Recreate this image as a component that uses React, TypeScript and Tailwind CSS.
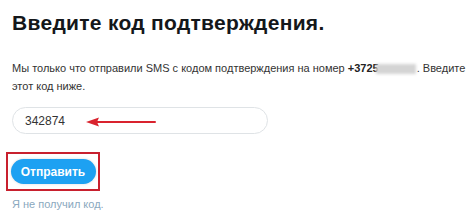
export default function App() {
  return (
    <div className="w-[474px] h-[218px] bg-white overflow-hidden relative font-['Liberation_Sans',Arial,sans-serif]">
      <div className="pl-3 pt-[9px]">
        <h1 className="text-[21px] leading-[28px] font-bold text-[#14171a] tracking-[0.3px]">
          Введите код подтверждения.
        </h1>

        <p className="mt-[22px] w-[458px] text-[11px] leading-[18px] text-[#333]">
          Мы только что отправили SMS с кодом подтверждения на номер{' '}
          <b className="text-[#222]">+3725</b>
          <span className="inline-block align-middle w-[40px] h-[10px] bg-[#d4d4d4] blur-[1.5px] -ml-[3px] mr-[1px]" />
          . Введите этот код ниже.
        </p>

        <div className="relative mt-[12px] w-[256px] h-[27px] rounded-full border border-[#dfe3e6] flex items-center pl-3 text-[12px] text-[#333]">
          342874
          {/* red arrow */}
          <svg className="absolute left-[72px] top-[9px]" width="72" height="10" viewBox="0 0 72 10">
            <path d="M12 5 L70 5" stroke="#d9232e" strokeWidth="2" strokeLinecap="round" />
            <path d="M1 5 L14 0.5 L12 5 L14 9.5 Z" fill="#d9232e" />
          </svg>
        </div>

        <div className="mt-[18px] -ml-[6px] w-[94px] h-[39px] border-2 border-[#c8202e] flex items-center justify-center">
          <button className="w-[85px] h-[25px] rounded-full bg-[#1da1f2] text-white text-[12px] font-bold shadow-[0_0_3px_rgba(0,0,0,0.15)]">
            Отправить
          </button>
        </div>

        <div className="mt-[5px] text-[11px] text-[#8aa8be]">Я не получил код.</div>
      </div>
    </div>
  )
}
